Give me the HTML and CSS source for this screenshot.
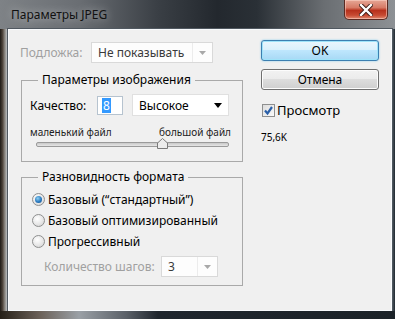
FILE: index.html
```html
<!DOCTYPE html>
<html lang="ru">
<head>
<meta charset="utf-8">
<title>Параметры JPEG</title>
<link rel="stylesheet" href="styles.css">
</head>
<body>
<div class="window">
  <div class="titlebar">
    <span class="title">Параметры JPEG</span>
    <div class="close">
      <svg width="14" height="12" viewBox="0 0 14 12"><path d="M2 1 L12 11 M12 1 L2 11" stroke="#3a1a14" stroke-width="4.2" stroke-linecap="square"/><path d="M2 1 L12 11 M12 1 L2 11" stroke="#fff" stroke-width="2.4" stroke-linecap="square"/></svg>
    </div>
  </div>
  <div class="middle">
    <div class="frame-left"></div>
    <div class="client">
      <div class="left">
        <div class="matte-row">
          <span class="label disabled">Подложка:</span>
          <div class="select disabled matte">
            <span class="value">Не показывать</span>
            <span class="arrow-box"><svg width="7" height="4" viewBox="0 0 7 4"><path d="M0 0 H7 L3.5 4 Z" fill="#a8a8a8"/></svg></span>
          </div>
        </div>
        <fieldset class="group g1">
          <legend>Параметры изображения</legend>
          <div class="quality-row">
            <span class="label q-label">Качество:</span>
            <div class="num"><span class="sel">8</span></div>
            <div class="select quality">
              <span class="value">Высокое</span>
              <svg width="8" height="5" viewBox="0 0 8 5"><path d="M0 0 H8 L4 5 Z" fill="#000"/></svg>
            </div>
          </div>
          <div class="slider-labels"><span>маленький файл</span><span>большой файл</span></div>
          <div class="slider">
            <div class="track"></div>
            <svg class="thumb" width="11" height="11" viewBox="0 0 11 11"><path d="M0.5 10.5 V5 L5.5 0.5 L10.5 5 V10.5 Z" fill="#ececec" stroke="#7a7a7a"/></svg>
          </div>
        </fieldset>
        <fieldset class="group g2">
          <legend>Разновидность формата</legend>
          <div class="radio-row"><span class="radio checked"></span><span class="label">Базовый (“стандартный”)</span></div>
          <div class="radio-row"><span class="radio"></span><span class="label">Базовый оптимизированный</span></div>
          <div class="radio-row"><span class="radio"></span><span class="label">Прогрессивный</span></div>
          <div class="steps-row">
            <span class="label disabled steps-label">Количество шагов:</span>
            <div class="select disabled steps">
              <span class="value">3</span>
              <span class="arrow-box"><svg width="7" height="4" viewBox="0 0 7 4"><path d="M0 0 H7 L3.5 4 Z" fill="#a8a8a8"/></svg></span>
            </div>
          </div>
        </fieldset>
      </div>
      <div class="right">
        <div class="btn default">OK</div>
        <div class="btn">Отмена</div>
        <div class="check-row">
          <span class="checkbox"><svg width="11" height="11" viewBox="0 0 11 11"><path d="M2 5.5 L4.5 8.5 L9 2" fill="none" stroke="#2a5fa8" stroke-width="2.2"/></svg></span>
          <span class="label check-label">Просмотр</span>
        </div>
        <div class="size">75,6K</div>
      </div>
    </div>
    <div class="frame-right"></div>
  </div>
  <div class="frame-bottom"></div>
</div>
</body>
</html>
```
FILE: styles.css
```css
* { box-sizing: border-box; }
html, body { margin: 0; padding: 0; }
body {
  width: 395px;
  height: 319px;
  overflow: hidden;
  background: #2a2f35;
  font-family: "Noto Sans", "Open Sans", sans-serif;
  font-size: 12px;
  color: #000;
}
.window {
  width: 395px;
  height: 319px;
  display: flex;
  flex-direction: column;
}
.titlebar {
  height: 29px;
  display: flex;
  align-items: flex-start;
  justify-content: space-between;
  background: linear-gradient(90deg, #7e8286 0%, #6a6e73 20%, #3a3f45 40%, #23282e 55%, #2a3036 65%, #6a6e72 82%, #8d9195 100%);
}
.title {
  margin: 7px 0 0 11px;
  font-size: 12px;
  line-height: 16px;
  color: #111;
  text-shadow: 0 0 8px rgba(255,255,255,0.6);
}
.close {
  width: 44px;
  height: 20px;
  margin-right: 7px;
  border: 1px solid #5a2a22;
  border-top: none;
  border-radius: 0 0 5px 5px;
  background: linear-gradient(180deg, #e6a796 0%, #d67a66 40%, #b7311c 55%, #c74a32 80%, #e08a70 100%);
  box-shadow: inset 0 0 0 1px rgba(255,220,210,0.5);
  display: flex;
  align-items: center;
  justify-content: center;
}
.middle {
  height: 282px;
  display: flex;
}
.frame-left {
  width: 8px;
  background: linear-gradient(90deg, #1e1a16 0%, #4a4038 30%, #8a8680 60%, #b5b8bb 85%, #52585e 100%);
}
.frame-right {
  width: 3px;
  background: linear-gradient(90deg, #59626a, #1f2830);
}
.frame-bottom {
  height: 8px;
  background: linear-gradient(90deg, #262018 0%, #6a6058 10%, #9aa0a6 20%, #5a6068 32%, #1f262e 40%, #1c2329 100%);
}
.client {
  width: 384px;
  background: #f0f0f0;
  border: 1px solid #f8fafc;
  outline: 1px solid #505860;
  display: flex;
}
.left {
  width: 235px;
  padding-left: 12px;
  display: flex;
  flex-direction: column;
}
.label { white-space: nowrap; }
.disabled { color: #a0a0a0; }
.matte-row {
  margin-top: 12px;
  height: 21px;
  display: flex;
  align-items: center;
  margin-left: -1px;
}
.matte-row .label { width: 71px; }
.select {
  height: 21px;
  background: #fff;
  border: 1px solid #b8b8b8;
  display: flex;
  align-items: center;
}
.select .value { flex: 1; padding-left: 6px; }
.select.disabled {
  border-color: #d9d9d9;
  color: #3a3a3a;
  background: #fdfdfd;
}
.select.matte { width: 122px; }
.arrow-box {
  width: 20px;
  height: 100%;
  border-left: 1px solid #ececec;
  display: flex;
  align-items: center;
  justify-content: center;
}
.group {
  margin: 0;
  width: 222px;
  border: 1px solid #a9a9a9;
  padding: 0 0 0 8px;
}
.group legend {
  margin-left: 8px;
  padding: 0 4px;
  font-size: 12px;
  line-height: 16px;
}
.g1 { margin-top: 9px; padding-top: 6px; padding-bottom: 11px; }
.quality-row {
  height: 22px;
  display: flex;
  align-items: center;
}
.q-label { width: 67px; }
.num {
  width: 26px;
  height: 19px;
  border: 1px solid #b6c3cf;
  background: #fff;
  display: flex;
  align-items: center;
  padding-left: 4px;
}
.sel {
  background: #3399ff;
  color: #fff;
  line-height: 15px;
  padding: 0 1px;
}
.select.quality {
  width: 97px;
  height: 22px;
  margin-left: 9px;
  border-color: #e0e0e0;
  padding-right: 6px;
}
.slider-labels {
  margin-top: 10px;
  width: 201px;
  display: flex;
  justify-content: space-between;
  font-size: 10px;
  line-height: 12px;
  color: #222;
}
.slider {
  position: relative;
  height: 12px;
  width: 201px;
}
.track {
  position: absolute;
  left: 6px;
  right: 2px;
  top: 4px;
  height: 5px;
  border: 1px solid #9a9a9a;
  border-radius: 2px;
  background: linear-gradient(180deg, #c8c8c8, #e6e6e6);
}
.thumb {
  position: absolute;
  left: 127px;
  top: 0;
}
.g2 { margin-top: 7px; padding-top: 4px; padding-bottom: 8px; padding-left: 10px; }
.g2 legend { margin-left: 6px; }
.radio-row {
  height: 21px;
  display: flex;
  align-items: center;
}
.radio {
  width: 13px;
  height: 13px;
  border-radius: 50%;
  border: 1px solid #8e8f8f;
  background: radial-gradient(circle at 40% 35%, #ffffff 0%, #e9e9e9 50%, #cfcfcf 100%);
  margin-right: 3px;
  display: flex;
  align-items: center;
  justify-content: center;
}
.radio.checked::after {
  content: "";
  width: 7px;
  height: 7px;
  border-radius: 50%;
  background: radial-gradient(circle at 40% 35%, #8fd0f2 0%, #2a7ac0 55%, #0f4b86 100%);
}
.steps-row {
  margin-top: 4px;
  height: 21px;
  display: flex;
  align-items: center;
  padding-left: 12px;
}
.steps-label { width: 117px; }
.select.steps { width: 57px; height: 21px; }
.right {
  padding-left: 17px;
  display: flex;
  flex-direction: column;
}
.btn {
  width: 118px;
  height: 21px;
  border: 1px solid #707070;
  border-radius: 3px;
  display: flex;
  align-items: center;
  justify-content: center;
  background: linear-gradient(180deg, #f2f2f2 0%, #ebebeb 49%, #dddddd 50%, #cfcfcf 100%);
  box-shadow: inset 0 0 0 1px #fcfcfc;
}
.btn.default {
  margin-top: 10px;
  border-color: #3c7fb1;
  background: linear-gradient(180deg, #eaf6fd 0%, #d9f0fc 49%, #bee6fd 50%, #a7d9f5 100%);
  box-shadow: inset 0 0 0 1px #9fe3f9, 0 0 2px #7ac8ec;
}
.btn + .btn { margin-top: 8px; }
.check-row {
  margin-top: 12px;
  height: 16px;
  display: flex;
  align-items: center;
}
.checkbox {
  width: 13px;
  height: 13px;
  margin-left: 1px;
  margin-right: 2px;
  border: 1px solid #8e8f8f;
  background: linear-gradient(135deg, #dcdcdc, #fbfbfb);
  display: flex;
  align-items: center;
  justify-content: center;
}
.check-label { font-size: 13px; }
.size {
  margin-top: 13px;
  font-size: 10px;
  line-height: 12px;
}
```
